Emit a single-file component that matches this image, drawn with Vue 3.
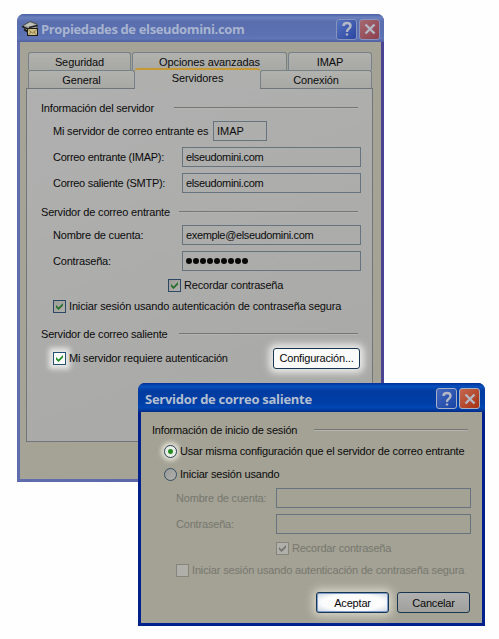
<script setup>
const tabsBack = [
  { label: 'Seguridad', cls: 'seg' },
  { label: 'Opciones avanzadas', cls: 'adv' },
  { label: 'IMAP', cls: 'imap' },
]
</script>

<template>
  <div class="desktop">
    <section class="window props">
      <header class="titlebar">
        <svg class="app-icon" width="18" height="18" viewBox="0 0 18 18">
          <path d="M1 5.500 L8 1.500 L15 4 V10 L9 13 L3 10 Z" fill="#a3a5a2" stroke="#4a4c48" />
          <path d="M3 5.500 L8 2.500 L13 4.500 L8 7 Z" fill="#c0c1ba" />
          <path d="M0 6.500 L6 9 M2 9.500 L6 12" stroke="#1d1d1b" stroke-width="1.600" />
          <path d="M7 7.500 L15.500 5.500" stroke="#1d1d1b" stroke-width="1.300" />
          <rect x="5.500" y="8.500" width="10" height="7" fill="#cdbd86" stroke="#1f1e18" />
          <path d="M6 9.500 L10.500 13 L15 9.500 M6.500 15 L9 12 M14.500 15 L12 12" fill="none" stroke="#7d6e43" stroke-width=".8" />
        </svg>
        <h1>Propiedades de elseudomini.com</h1>
        <span class="cap help"><svg width="18" height="18" viewBox="0 0 18 18"><path d="M5.500 6 Q5.500 3 9 3 Q12.500 3 12.500 6 Q12.500 7.500 10.500 9 Q9 10 9 12 M9 13.500 V15.500" /></svg></span>
        <span class="cap close"><svg width="18" height="18" viewBox="0 0 18 18"><path d="M4.500 4.500 L13.500 13.500 M13.500 4.500 L4.500 13.500" /></svg></span>
      </header>
      <div class="body">
        <nav class="tabs">
          <span v-for="t in tabsBack" :key="t.label" class="tab" :class="t.cls">{{ t.label }}</span>
        </nav>
        <nav class="tabs front">
          <span class="tab gen">General</span>
          <span class="tab active">Servidores</span>
          <span class="tab con">Conexión</span>
        </nav>
        <div class="panel">
          <div class="row group g1"><span>Información del servidor</span><i></i></div>
          <div class="row m3"><label class="kind">Mi servidor de correo entrante es</label><div class="field small">IMAP</div></div>
          <div class="row m6"><label class="tight">Correo entrante (IMAP):</label><div class="field">elseudomini.com</div></div>
          <div class="row m6"><label class="tight">Correo saliente (SMTP):</label><div class="field">elseudomini.com</div></div>
          <div class="row group m9"><span>Servidor de correo entrante</span><i></i></div>
          <div class="row m3"><label>Nombre de cuenta:</label><div class="field">exemple@elseudomini.com</div></div>
          <div class="row m6"><label>Contraseña:</label><div class="field"><b v-for="n in 9" :key="n" class="dot"></b></div></div>
          <div class="row m4 remember">
            <span class="check"><svg width="11" height="11" viewBox="0 0 11 11"><path d="M2 4 L4.500 6.500 L9 2 V4.500 L4.500 9 L2 6.500 Z" /></svg></span>
            <span>Recordar contraseña</span>
          </div>
          <div class="row m1">
            <span class="check"><svg width="11" height="11" viewBox="0 0 11 11"><path d="M2 4 L4.500 6.500 L9 2 V4.500 L4.500 9 L2 6.500 Z" /></svg></span>
            <span class="secure">Iniciar sesión usando autenticación de contraseña segura</span>
          </div>
          <div class="row group m8"><span>Servidor de correo saliente</span><i></i></div>
          <div class="row m4">
            <span class="check lit"><svg width="11" height="11" viewBox="0 0 11 11"><path d="M2 4 L4.500 6.500 L9 2 V4.500 L4.500 9 L2 6.500 Z" /></svg></span>
            <span>Mi servidor requiere autenticación</span>
            <button class="btn config">Configuración...</button>
          </div>
        </div>
      </div>
    </section>

    <section class="window login">
      <header class="titlebar">
        <h1>Servidor de correo saliente</h1>
        <span class="cap help"><svg width="18" height="18" viewBox="0 0 18 18"><path d="M5.500 6 Q5.500 3 9 3 Q12.500 3 12.500 6 Q12.500 7.500 10.500 9 Q9 10 9 12 M9 13.500 V15.500" /></svg></span>
        <span class="cap close"><svg width="18" height="18" viewBox="0 0 18 18"><path d="M4.500 4.500 L13.500 13.500 M13.500 4.500 L4.500 13.500" /></svg></span>
      </header>
      <div class="body">
        <div class="row group"><span>Información de inicio de sesión</span><i></i></div>
        <div class="row opt m1"><span class="radio on"></span><span>Usar misma configuración que el servidor de correo entrante</span></div>
        <div class="row opt m3"><span class="radio"></span><span>Iniciar sesión usando</span></div>
        <div class="row off m4"><label>Nombre de cuenta:</label><div class="field"></div></div>
        <div class="row off m6"><label>Contraseña:</label><div class="field"></div></div>
        <div class="row off m4 remember">
          <span class="check"><svg width="11" height="11" viewBox="0 0 11 11"><path d="M2 4 L4.500 6.500 L9 2 V4.500 L4.500 9 L2 6.500 Z" /></svg></span>
          <span>Recordar contraseña</span>
        </div>
        <div class="row off m2"><span class="check"></span><span class="secure">Iniciar sesión usando autenticación de contraseña segura</span></div>
        <footer class="actions"><button class="btn ok">Aceptar</button><button class="btn cancel">Cancelar</button></footer>
      </div>
    </section>
  </div>
</template>

<style>
body { background: #fff; overflow: hidden; }
</style>

<style scoped>
* { box-sizing: border-box; }
.desktop { position: relative; width: 499px; height: 639px; background: #fefefe; font-family: "Liberation Sans", Arial, sans-serif; font-size: 11px; letter-spacing: -0.185px; color: #0b0b0b; white-space: nowrap; }
.window { position: absolute; display: flex; flex-direction: column; border-radius: 7px 7px 0 0; }
.props { left: 17px; top: 14px; width: 367px; height: 468px; background: linear-gradient(90deg, #5f6daf, #5a65a6 50%, #4a4394); }
.login { left: 138px; top: 383px; width: 347px; height: 243px; background: #00208c; }
.titlebar { display: flex; align-items: center; height: 28px; flex: none; padding: 2px 4px 0 5px; border-radius: 7px 7px 0 0; }
.props .titlebar { background: linear-gradient(#4b5fa3, #6b80bd 12%, #5a6eae 28%, #5b71b2 75%, #6076b6 88%, #505f9f); }
.login .titlebar { height: 29px; padding: 2px 5px 0 7px; background: linear-gradient(#002f98, #0a50bd 12%, #003b9f 28%, #003fa8 72%, #0047b4 85%, #002c88); }
h1 { margin: 0; flex: 1; font: bold 13px "Open Sans", sans-serif; letter-spacing: -0.36px; color: #a8b4cf; }
.app-icon { margin-right: 1px; }
.login h1 { color: #b3bfd0; letter-spacing: -0.28px; }
.cap { width: 21px; height: 21px; border: 1px solid #8793bb; border-radius: 3px; margin-left: 2px; display: flex; align-items: center; justify-content: center; flex: none; }
.cap svg { fill: none; stroke: #b4b7c5; stroke-width: 2.4; }
.help { background: linear-gradient(135deg, #5573c0, #2b45a1); }
.close { background: linear-gradient(135deg, #a56871, #8c3f4c); }
.login .cap { border-color: #a8b1c4; }
.login .help { background: linear-gradient(135deg, #4668bd, #1744a6); }
.login .close { background: linear-gradient(135deg, #c46750, #a63112); }
.props .body { flex: 1; margin: 0 3px 3px; padding: 10px 8px 0 6px; background: #a4a395; }
.tabs { display: flex; height: 18px; margin-left: 2px; width: 344px; letter-spacing: -0.1px; }
.tab { height: 18px; border: 1px solid #76828a; border-bottom: 0; border-radius: 3px 3px 0 0; background: linear-gradient(#b1b1ae, #a8a8a4); text-align: center; line-height: 19px; }
.seg { width: 103px; margin-right: 1px; }
.adv { width: 155px; margin-right: 1px; }
.imap { flex: 1; }
.gen { width: 107px; line-height: 19px; }
.con { flex: 1; line-height: 19px; }
.active { width: 125px; height: 21px; margin-top: -2px; border: 0; border-top: 2px solid #c69932; background: #afafad; line-height: 17px; position: relative; z-index: 1; }
.panel { width: 347px; height: 354px; border: 1px solid #70767a; background: linear-gradient(160deg, #b0b0b0, #a8a8a5); padding: 9px 11px 0 26px; }
.row { display: flex; height: 20px; align-items: center; }
.m1 { margin-top: 1px; } .m2 { margin-top: 2px; } .m3 { margin-top: 3px; } .m4 { margin-top: 4px; } .m6 { margin-top: 6px; } .m8 { margin-top: 8px; } .m9 { margin-top: 9px; }
.group { margin-left: -12px; }
.group span { width: 138px; }
.g1 span { width: 133px; }
.group i { flex: 1; height: 1px; background: #777875; box-shadow: 0 1px #b3b3b0; margin: -2px 3px 0 0; }
label { width: 129px; flex: none; }
label.kind { width: 160px; }
label.tight { letter-spacing: -0.28px; }
.secure { letter-spacing: -0.15px; }
.field { height: 20px; flex: 1; border: 1px solid #66747f; padding: 0 3px; display: flex; align-items: center; letter-spacing: -0.35px; }
.field.small { flex: none; width: 54px; letter-spacing: 0; }
.dot { width: 6px; height: 6px; border-radius: 50%; background: #090909; margin-right: 1px; }
.check { width: 13px; height: 13px; flex: none; border: 1px solid #2d4866; background: linear-gradient(135deg, #9c9c98, #b0b0ad); margin-right: 3px; display: flex; }
.check path { fill: #246f28; }
.check.lit { background: #fafafa; box-shadow: 0 0 5px 4px #e9e9e7; border-color: #23516f; }
.check.lit path { fill: #218b25; }
.props .remember { margin-left: 115px; }
.btn { font: inherit; letter-spacing: inherit; color: #080808; border: 1px solid #183650; border-radius: 3px; padding: 0; height: 21px; text-align: center; }
.config { margin: 0 1px 0 auto; width: 87px; background: #fafafa; box-shadow: 0 0 7px 4px #eaeae8; }
.login .body { flex: 1; margin: 0 3px 3px; padding: 8px 11px 0; background: #a3a295; }
.login .group { margin-left: 0; }
.login .group span { width: 162px; }
.opt { padding-left: 12px; }
.radio { width: 13px; height: 13px; border-radius: 50%; border: 1px solid #364d62; background: linear-gradient(135deg, #999b98, #b1b1ac); margin-right: 3px; flex: none; }
.radio.on { background: radial-gradient(circle, #268b22 0 2px, #e9eee7 3px); box-shadow: 0 0 4px 3px #e0dfd2; }
.off { color: #77776e; padding-left: 24px; }
.off label { width: 100px; }
.off .check { border-color: #85857e; background: #b0afa9; }
.off .check path { fill: #73746f; }
.off.remember { padding-left: 124px; }
.actions { display: flex; gap: 8px; justify-content: flex-end; margin: 12px 1px 0 0; }
.actions .btn { width: 73px; }
.ok { background: radial-gradient(ellipse at center, #fcfcfc 60%, #c9d3df 100%); box-shadow: inset 0 0 0 1px #7e9fcd, 0 0 8px 3px #d9d7c8; }
.cancel { background: linear-gradient(#b0b0b0, #a0a09d); }
</style>
